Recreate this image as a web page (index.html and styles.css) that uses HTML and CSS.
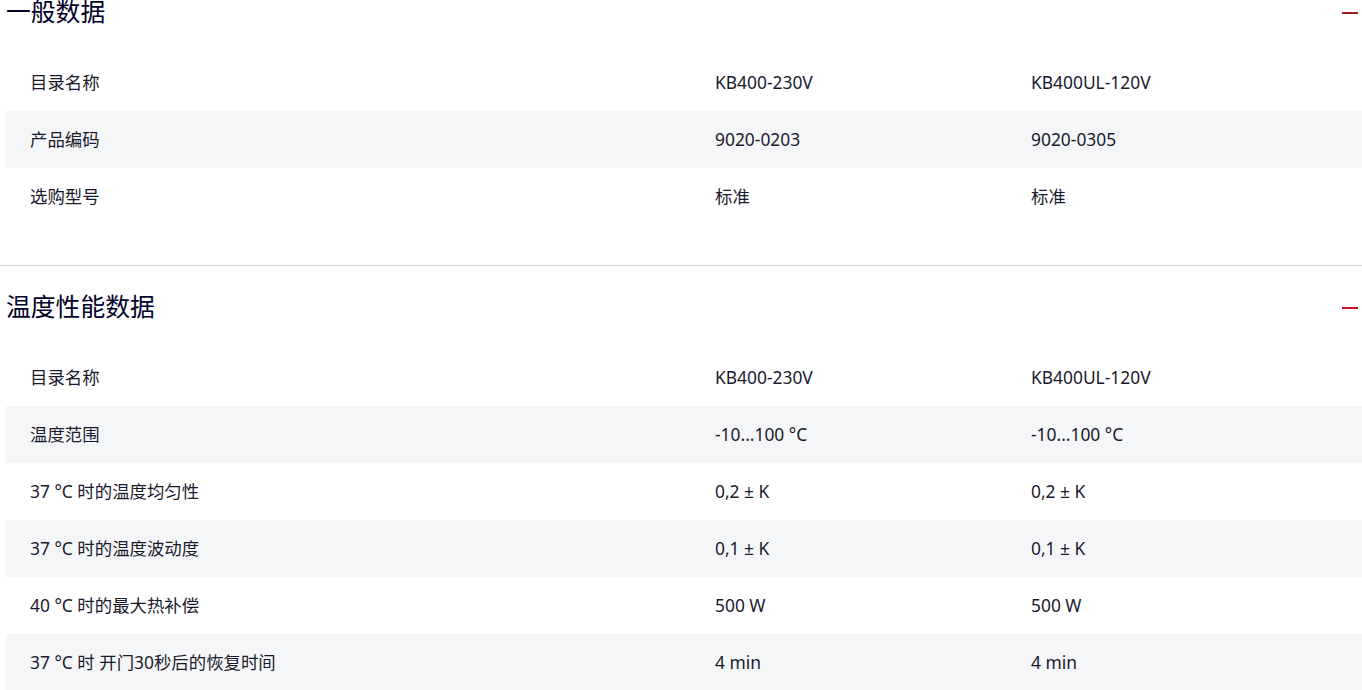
FILE: index.html
```html
<!DOCTYPE html>
<html lang="zh">
<head>
<meta charset="utf-8">
<title>技术数据</title>
<link rel="stylesheet" href="styles.css">
</head>
<body>
<main class="page">
  <section class="group">
    <header class="group-head">
      <h2 class="group-title">一般数据</h2>
      <button class="toggle toggle-active" aria-label="收起"><span class="minus"></span></button>
    </header>
    <div class="table">
      <div class="row"><div class="cell label">目录名称</div><div class="cell">KB400-230V</div><div class="cell">KB400UL-120V</div></div>
      <div class="row"><div class="cell label">产品编码</div><div class="cell">9020-0203</div><div class="cell">9020-0305</div></div>
      <div class="row"><div class="cell label">选购型号</div><div class="cell">标准</div><div class="cell">标准</div></div>
    </div>
  </section>
  <section class="group">
    <header class="group-head">
      <h2 class="group-title">温度性能数据</h2>
      <button class="toggle" aria-label="收起"><span class="minus"></span></button>
    </header>
    <div class="table">
      <div class="row"><div class="cell label">目录名称</div><div class="cell">KB400-230V</div><div class="cell">KB400UL-120V</div></div>
      <div class="row"><div class="cell label">温度范围</div><div class="cell">-10...100 °C</div><div class="cell">-10...100 °C</div></div>
      <div class="row"><div class="cell label">37 °C 时的温度均匀性</div><div class="cell">0,2 ± K</div><div class="cell">0,2 ± K</div></div>
      <div class="row"><div class="cell label">37 °C 时的温度波动度</div><div class="cell">0,1 ± K</div><div class="cell">0,1 ± K</div></div>
      <div class="row"><div class="cell label">40 °C 时的最大热补偿</div><div class="cell">500 W</div><div class="cell">500 W</div></div>
      <div class="row"><div class="cell label">37 °C 时 开门30秒后的恢复时间</div><div class="cell">4 min</div><div class="cell">4 min</div></div>
    </div>
  </section>
</main>
</body>
</html>
```

FILE: styles.css
```css
html, body {
  margin: 0;
  padding: 0;
  background: #ffffff;
}

body {
  font-family: "Noto Sans", "Noto Sans CJK SC", sans-serif;
  color: #000028;
  overflow: hidden;
}

.page {
  margin-top: -29px;
}

.group {
  padding-left: 6px;
}

.group + .group {
  border-top: 1px solid #cfcfd4;
}

.group:first-child {
  padding-bottom: 40px;
}

.group-head {
  height: 83px;
  display: flex;
  align-items: center;
  justify-content: space-between;
}

.group-title {
  margin: 0 0 4px;
  font-family: "Noto Sans CJK SC", "Noto Sans", sans-serif;
  font-size: 24.8px;
  font-weight: 400;
  line-height: 1.2;
  color: #000028;
}

.toggle {
  border: 0;
  background: transparent;
  padding: 0;
  margin-right: 4px;
  width: 16px;
  height: 16px;
  display: flex;
  align-items: center;
  cursor: pointer;
}

.minus {
  display: block;
  width: 16px;
  height: 2px;
  background: #d0101c;
}

.toggle-active .minus {
  background: #9e1b22;
}

.table {
  display: flex;
  flex-direction: column;
}

.row {
  display: grid;
  grid-template-columns: 685px 316px 1fr;
  height: 57px;
  align-items: center;
}

.row:nth-child(even) {
  background: #f5f6f7;
}

.cell {
  padding-left: 24px;
  font-size: 17.4px;
  line-height: 1.3;
  white-space: nowrap;
  color: #1a1a2e;
}
```
